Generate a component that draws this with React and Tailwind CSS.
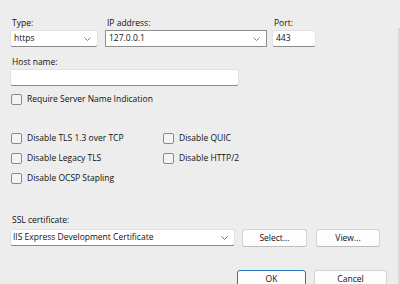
import React from "react";

function Chevron() {
  return (
    <svg width="7" height="4" viewBox="0 0 7 4" className="shrink-0">
      <path d="M0.5 0.5L3.5 3.5L6.5 0.5" fill="none" stroke="#7a7a7a" strokeWidth="1" />
    </svg>
  );
}

function Label({ children }) {
  return <div className="h-[14px] pl-[2px] leading-[14px]">{children}</div>;
}

function Checkbox({ label }) {
  return (
    <div className="flex h-[14px] items-center gap-[5px]">
      <div className="h-[11px] w-[11px] rounded-[2px] border border-[#8a8a8a] bg-[#f4f4f4]" />
      <span className="leading-[14px]">{label}</span>
    </div>
  );
}

function Button({ children, primary }) {
  return (
    <div
      className={
        primary
          ? "flex h-[18px] items-center justify-center rounded-[3px] border border-[#2a73c5] bg-[#fdfdfd]"
          : "flex h-[18px] items-center justify-center rounded-[3px] border border-[#d3d3d3] border-b-[#bdbdbd] bg-[#fdfdfd]"
      }
    >
      <span className="leading-[10px]">{children}</span>
    </div>
  );
}

export default function App() {
  return (
    <div
      className="flex h-[284px] w-[400px] flex-col overflow-hidden bg-[#ededed] text-[8.5px] text-[#111111]"
      style={{ fontFamily: '"Open Sans", "Noto Sans", sans-serif' }}
    >
      <div className="h-[4px] bg-[#e9eff7]" />
      <div className="flex flex-1">
        <div className="flex flex-1 flex-col pl-[10px] pt-[16px]">
          {/* type / ip / port */}
          <div className="flex">
            <div className="w-[88px]">
              <Label>Type:</Label>
              <div className="flex h-[17px] items-center justify-between rounded-[3px] border border-[#e2e2e2] border-b-[#8a8a8a] bg-white pl-[3px] pr-[6px]">
                <span>https</span>
                <Chevron />
              </div>
            </div>
            <div className="ml-[7px] w-[162px]">
              <Label>IP address:</Label>
              <div className="flex h-[17px] items-center justify-between border border-[#8f8f8f] bg-white pl-[3px] pr-[6px]">
                <span>127.0.0.1</span>
                <Chevron />
              </div>
            </div>
            <div className="ml-[5px] w-[44px]">
              <Label>Port:</Label>
              <div className="flex h-[17px] items-center rounded-[3px] border border-[#e2e2e2] border-b-[#8a8a8a] bg-white pl-[3px]">
                <span>443</span>
              </div>
            </div>
          </div>

          {/* host name */}
          <div className="mt-[8px] w-[229px]">
            <Label>Host name:</Label>
            <div className="h-[17px] rounded-[3px] border border-[#e2e2e2] border-b-[#8a8a8a] bg-white" />
          </div>

          <div className="mt-[6px] pl-[1px]">
            <Checkbox label="Require Server Name Indication" />
          </div>

          <div className="mt-[25px] grid grid-cols-[152px_auto] gap-y-[6px] pl-[1px]">
            <Checkbox label="Disable TLS 1.3 over TCP" />
            <Checkbox label="Disable QUIC" />
            <Checkbox label="Disable Legacy TLS" />
            <Checkbox label="Disable HTTP/2" />
            <Checkbox label="Disable OCSP Stapling" />
          </div>

          {/* ssl certificate */}
          <div className="mt-[28px]">
            <Label>SSL certificate:</Label>
            <div className="mt-[2px] flex items-start">
              <div className="flex h-[17px] w-[225px] items-center justify-between rounded-[3px] border border-[#e2e2e2] border-b-[#8a8a8a] bg-white pl-[2px] pr-[6px]">
                <span>IIS Express Development Certificate</span>
                <Chevron />
              </div>
              <div className="ml-[7px] w-[65px]">
                <Button>Select...</Button>
              </div>
              <div className="ml-[9px] w-[64px]">
                <Button>View...</Button>
              </div>
            </div>
          </div>

          <div className="mt-[23px] flex justify-end gap-[8px] pr-[11px]">
            <div className="w-[69px]">
              <Button primary>OK</Button>
            </div>
            <div className="w-[73px]">
              <Button primary={false}>Cancel</Button>
            </div>
          </div>
        </div>
        <div className="mt-[28px] w-[2px] bg-[#d8d8d8]" />
      </div>
    </div>
  );
}
